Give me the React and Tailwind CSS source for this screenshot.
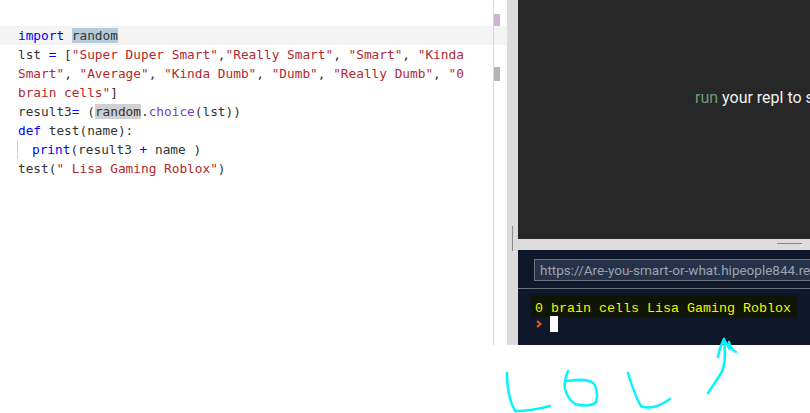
import React from 'react';

const Str = ({ children }) => <span className="text-[#b02a30]">{children}</span>;
const Op = ({ children }) => <span className="text-[#0000ff]">{children}</span>;

const CodeLine = ({ children, active }) => (
  <div className={`h-[19px] pl-[18px] whitespace-pre leading-[19px] ${active ? 'bg-[#f3f3f4]' : ''}`}>{children}</div>
);

const Editor = () => (
  <div className="flex w-[507px] shrink-0">
    {/* Code */}
    <div className="w-[493px] pt-[26px] font-['DejaVu_Sans_Mono',monospace] text-[12.77px] text-[#333333]">
      <CodeLine active>
        <Op>import</Op> <span className="bg-[#b5cbdc]">random</span>
      </CodeLine>
      <CodeLine>
        lst <Op>=</Op> [<Str>"Super Duper Smart"</Str>,<Str>"Really Smart"</Str>, <Str>"Smart"</Str>, <Str>"Kinda</Str>
      </CodeLine>
      <CodeLine>
        <Str>Smart"</Str>, <Str>"Average"</Str>, <Str>"Kinda Dumb"</Str>, <Str>"Dumb"</Str>, <Str>"Really Dumb"</Str>, <Str>"0</Str>
      </CodeLine>
      <CodeLine>
        <Str>brain cells"</Str>]
      </CodeLine>
      <CodeLine>
        result3<Op>=</Op> (<span className="bg-[#d0d0d0]">random</span>.<span className="text-[#7a3fc0]">choice</span>(lst))
      </CodeLine>
      <CodeLine>
        <Op>def</Op> test(name):
      </CodeLine>
      <div className="ml-[17px] h-[19px] border-l border-[#d0d0d0] pl-[14px] leading-[19px] whitespace-pre">
        <Op>print</Op>(result3 <Op>+</Op> name )
      </div>
      <CodeLine>
        test(<Str>" Lisa Gaming Roblox"</Str>)
      </CodeLine>
    </div>

    {/* Overview ruler */}
    <div className="w-[14px] border-l border-[#d8d8d8]">
      <div className="mt-[14px] h-[12px] w-[6px] bg-[#cdb4d2]"></div>
      <div className="h-[19px] bg-[#f3f3f4]"></div>
      <div className="mt-[22px] h-[14px] w-[6px] bg-[#b4b4b4]"></div>
    </div>
  </div>
);

const Splitter = () => (
  <div className="flex w-[11px] shrink-0 flex-col bg-[#dcdcdc] pt-[226px]">
    <div className="ml-[5px] h-[25px] w-px bg-[#8a8a8a]"></div>
  </div>
);

const Output = () => (
  <div className="flex h-[239px] items-center overflow-hidden whitespace-nowrap bg-[#272727] pb-[44px] pl-[177px] font-['Roboto',sans-serif] text-[16px] text-[#f0f0f0]">
    <span className="text-[#6f9c7a]">run</span>&nbsp;your repl to see the results here
  </div>
);

const Console = () => (
  <div className="flex-1 overflow-hidden bg-[#0f172a]">
    <div className="h-[39px] border-b border-[#6b7280] pl-4 pt-[9px]">
      <div className="flex h-[22px] w-[300px] items-center border border-[#6b7280] bg-[#25324a] pl-[5px] font-['Roboto',sans-serif] text-[13.5px] whitespace-nowrap text-[#9ca3af]">
        https://Are-you-smart-or-what.hipeople844.repl.run
      </div>
    </div>
    <div className="pl-[13px] pt-[6px] font-['Liberation_Mono',monospace] text-[13.33px]">
      <div className="h-[22px] w-[266px] bg-[#0f1404] pl-1 leading-[27px] whitespace-pre text-[#f5f500]">
        0 brain cells Lisa Gaming Roblox
      </div>
      <div className="-mt-px flex h-4 items-center pl-[5px]">
        <svg width="7" height="8" viewBox="0 0 7 8" fill="none" stroke="#f0501e" strokeWidth="2.2">
          <path d="M1 1 L4.5 4 L1 7" />
        </svg>
        <div className="ml-[7px] h-4 w-2 bg-white"></div>
      </div>
    </div>
  </div>
);

const Scribble = () => (
  <svg width="810" height="413" className="absolute left-0 top-0" fill="none" stroke="#05f5ff" strokeWidth="2.5" strokeLinecap="round" strokeLinejoin="round">
    <path d="M507 373 C507 388 510 402 515 411 C527 411 539 409 550 406" />
    <path d="M568 371 C565 378 564 384 565 389 C567 396 570 401 575 404 C583 406 592 406 596 402 C598 396 597 388 594 384 C590 379 581 379 567 381" />
    <path d="M628 373 C632 386 636 398 641 406 C650 410 660 406 670 399" />
    <path d="M708 393 C714 384 720 376 723 369 C726 360 725 350 724 339 M718 357 C719 350 721 345 724 339 M729 342 C730 347 732 350 736 352 M724 340 L730 349" />
  </svg>
);

export default function App() {
  return (
    <div className="relative h-[413px] w-[810px] overflow-hidden bg-white">
      <div className="flex h-[345px]">
        <Editor />
        <Splitter />
        <div className="flex min-w-0 flex-1 flex-col">
          <Output />
          <div className="h-[11px] shrink-0 bg-[#dcdcdc] pt-[4px]">
            <div className="ml-[259px] h-px w-[25px] bg-[#8a8a8a]"></div>
          </div>
          <Console />
        </div>
      </div>
      <Scribble />
    </div>
  );
}
